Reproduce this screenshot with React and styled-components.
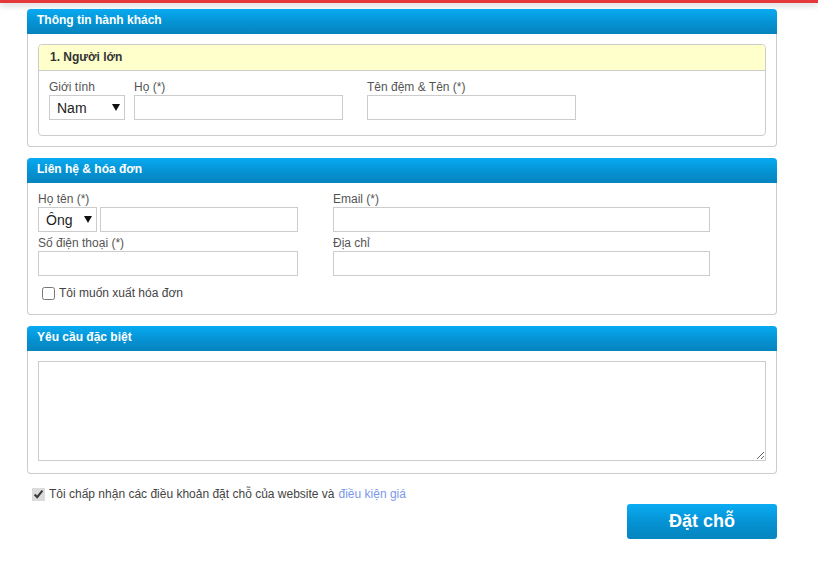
import React from 'react';
import styled, { createGlobalStyle } from 'styled-components';

const GlobalStyle = createGlobalStyle`
  body {
    margin: 0;
    background: #fff;
    font-family: "Liberation Sans", Arial, sans-serif;
    font-size: 12px;
    color: #444;
  }
`;

const TopBar = styled.div`
  height: 3px;
  background: #e5383b;
  box-shadow: 0 2px 6px rgba(0, 0, 0, 0.25);
`;

const Page = styled.div`
  width: 750px;
  margin-left: 27px;
  padding-top: 6px;
`;

const Panel = styled.div`
  border: 1px solid #ccc;
  border-top: none;
  border-radius: 4px;
  margin-bottom: 11px;
  background: #fff;
`;

const PanelHeader = styled.div`
  height: 25px;
  line-height: 23px;
  margin: 0 -1px;
  padding-left: 10px;
  border-radius: 4px 4px 0 0;
  background: linear-gradient(to bottom, #08aaf2 0%, #0592d2 55%, #0584bd 100%);
  color: #fff;
  font-weight: bold;
  font-size: 12px;
`;

const PanelBody = styled.div`
  padding: ${(p) => p.$pad || '10px'};
`;

const SubBox = styled.div`
  border: 1px solid #ccc;
  border-radius: 4px;
  overflow: hidden;
`;

const SubHeader = styled.div`
  height: 25px;
  line-height: 25px;
  padding-left: 11px;
  background: #ffffcc;
  border-bottom: 1px solid #ccc;
  font-weight: bold;
  color: #333;
`;

const SubBody = styled.div`
  display: flex;
  padding: 9px 10px 15px;
`;

const Field = styled.div`
  display: flex;
  flex-direction: column;
  margin-right: ${(p) => p.$gap || '0px'};
`;

const Label = styled.label`
  display: block;
  height: 15px;
  line-height: 15px;
  color: #555;
`;

const Input = styled.input`
  box-sizing: border-box;
  width: ${(p) => p.$w}px;
  height: 25px;
  border: 1px solid #ccc;
  padding: 2px 5px;
  font-family: inherit;
  font-size: 13px;
  outline: none;
  background: #fff;
`;

const SelectWrap = styled.div`
  position: relative;
  width: ${(p) => p.$w}px;
  height: 25px;
  margin-right: ${(p) => p.$gap || '0px'};
`;

const Select = styled.select`
  appearance: none;
  -webkit-appearance: none;
  box-sizing: border-box;
  width: 100%;
  height: 25px;
  border: 1px solid #ccc;
  border-radius: 0;
  background: #fff;
  padding: 0 0 0 7px;
  font-family: inherit;
  font-size: 14px;
  color: #222;
  outline: none;
`;

const Arrow = styled.svg`
  position: absolute;
  right: 5px;
  top: 9px;
  pointer-events: none;
`;

const Grid = styled.div`
  display: grid;
  grid-template-columns: 295px 377px;
  row-gap: 4px;
`;

const Row = styled.div`
  display: flex;
`;

const CheckRow = styled.label`
  display: flex;
  align-items: center;
  margin: ${(p) => p.$m || '0'};
  color: #444;
  font-size: 12px;
  input {
    width: 13px;
    height: 13px;
    margin: 0 4px 0 0;
    accent-color: #dcdcdc;
  }
`;

const Link = styled.a`
  color: #7b98ea;
  text-decoration: none;
  margin-left: 4px;
`;

const TextArea = styled.textarea`
  display: block;
  box-sizing: border-box;
  width: 100%;
  height: 100px;
  border: 1px solid #ccc;
  outline: none;
  font-family: inherit;
`;

const Footer = styled.div`
  display: flex;
  justify-content: flex-end;
  margin-top: 3px;
`;

const Button = styled.button`
  width: 150px;
  height: 35px;
  border: none;
  border-radius: 3px;
  background: linear-gradient(to bottom, #0aacf4 0%, #0593d4 50%, #0585be 100%);
  color: #fff;
  font-family: "Liberation Sans", Arial, sans-serif;
  font-weight: bold;
  font-size: 18px;
  cursor: pointer;
`;

const Caret = () => (
  <Arrow width="8" height="7" viewBox="0 0 8 7">
    <path d="M0 0 L8 0 L4 7 Z" fill="#111" />
  </Arrow>
);

export default function App() {
  return (
    <>
      <GlobalStyle />
      <TopBar />
      <Page>
        <Panel>
          <PanelHeader>Thông tin hành khách</PanelHeader>
          <PanelBody $pad="10px 10px 10px">
            <SubBox>
              <SubHeader>1. Người lớn</SubHeader>
              <SubBody>
                <Field $gap="9px">
                  <Label>Giới tính</Label>
                  <SelectWrap $w={76}>
                    <Select defaultValue="Nam">
                      <option>Nam</option>
                      <option>Nữ</option>
                    </Select>
                    <Caret />
                  </SelectWrap>
                </Field>
                <Field $gap="24px">
                  <Label>Họ (*)</Label>
                  <Input $w={209} />
                </Field>
                <Field>
                  <Label>Tên đệm &amp; Tên (*)</Label>
                  <Input $w={209} />
                </Field>
              </SubBody>
            </SubBox>
          </PanelBody>
        </Panel>

        <Panel>
          <PanelHeader>Liên hệ &amp; hóa đơn</PanelHeader>
          <PanelBody $pad="9px 10px 14px">
            <Grid>
              <Field>
                <Label>Họ tên (*)</Label>
                <Row>
                  <SelectWrap $w={59} $gap="3px">
                    <Select defaultValue="Ông">
                      <option>Ông</option>
                      <option>Bà</option>
                    </Select>
                    <Caret />
                  </SelectWrap>
                  <Input $w={198} />
                </Row>
              </Field>
              <Field>
                <Label>Email (*)</Label>
                <Input $w={377} />
              </Field>
              <Field>
                <Label>Số điện thoại (*)</Label>
                <Input $w={260} />
              </Field>
              <Field>
                <Label>Địa chỉ</Label>
                <Input $w={377} />
              </Field>
            </Grid>
            <CheckRow $m="10px 0 0 4px">
              <input type="checkbox" />
              Tôi muốn xuất hóa đơn
            </CheckRow>
          </PanelBody>
        </Panel>

        <Panel>
          <PanelHeader>Yêu cầu đặc biệt</PanelHeader>
          <PanelBody $pad="10px 10px 12px">
            <TextArea />
          </PanelBody>
        </Panel>

        <CheckRow $m="13px 0 0 5px">
          <input type="checkbox" defaultChecked />
          Tôi chấp nhận các điều khoản đặt chỗ của website và
          <Link href="#">điều kiện giá</Link>
        </CheckRow>

        <Footer>
          <Button>Đặt chỗ</Button>
        </Footer>
      </Page>
    </>
  );
}
